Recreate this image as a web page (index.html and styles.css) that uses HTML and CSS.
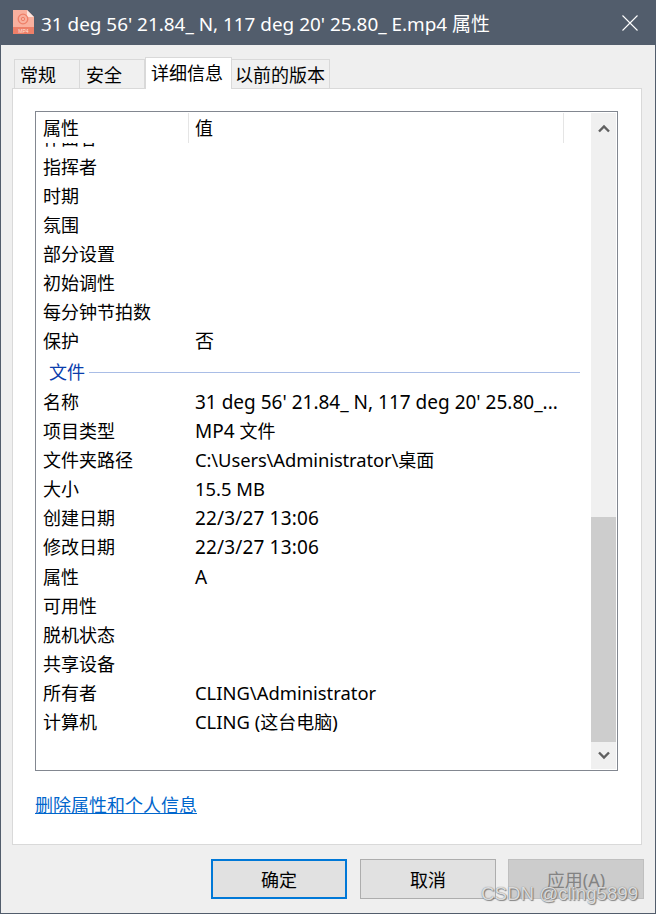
FILE: index.html
```html
<!DOCTYPE html>
<html lang="zh-CN">
<head>
<meta charset="utf-8">
<title>属性</title>
<link rel="stylesheet" href="styles.css">
</head>
<body>
<div class="window">
  <header class="titlebar">
    <svg class="file-icon" width="21" height="24" viewBox="0 0 21 24">
      <path d="M0 0H14L21 7V24H0Z" fill="#f9b09e"/>
      <path d="M14 0L21 7H14Z" fill="#fde3dc"/>
      <rect x="0" y="17" width="21" height="7" fill="#ee7f68"/>
      <circle cx="10" cy="9" r="4.8" fill="none" stroke="#ee7f68" stroke-width="1.3"/>
      <circle cx="10" cy="9" r="1.7" fill="none" stroke="#ee7f68" stroke-width="1"/>
      <text class="icon-label" x="10.5" y="22.6" text-anchor="middle">MP4</text>
    </svg>
    <span class="title">31 deg 56' 21.84_ N, 117 deg 20' 25.80_ E.mp4 属性</span>
    <svg class="close" width="16" height="16" viewBox="0 0 16 16"><path d="M.5.5L15.5 15.5M15.5.5L.5 15.5" stroke="#fff" stroke-width="1.1" fill="none"/></svg>
  </header>
  <div class="body">
    <nav class="tabs">
      <div class="tab t1">常规</div>
      <div class="tab t2">安全</div>
      <div class="tab active">详细信息</div>
      <div class="tab t4">以前的版本</div>
    </nav>
    <section class="panel">
      <div class="listbox">
        <div class="content">
          <div class="head">
            <div class="hname">属性</div>
            <div class="hvalue">值</div>
            <div class="hrest"></div>
          </div>
          <div class="viewport">
            <div class="rows">
              <div class="row"><span class="k">作曲者</span></div>
              <div class="row"><span class="k">指挥者</span></div>
              <div class="row"><span class="k">时期</span></div>
              <div class="row"><span class="k">氛围</span></div>
              <div class="row"><span class="k">部分设置</span></div>
              <div class="row"><span class="k">初始调性</span></div>
              <div class="row"><span class="k">每分钟节拍数</span></div>
              <div class="row"><span class="k">保护</span><span class="v">否</span></div>
              <div class="group"><span class="gname">文件</span><span class="gline"></span></div>
              <div class="row"><span class="k">名称</span><span class="v">31 deg 56' 21.84_ N, 117 deg 20' 25.80_...</span></div>
              <div class="row"><span class="k">项目类型</span><span class="v">MP4 <span class="cjk">文件</span></span></div>
              <div class="row"><span class="k">文件夹路径</span><span class="v tight path">C:\Users\Administrator\<span class="cjk">桌面</span></span></div>
              <div class="row"><span class="k">大小</span><span class="v tight">15.5 MB</span></div>
              <div class="row"><span class="k">创建日期</span><span class="v wide">22/3/27 13:06</span></div>
              <div class="row"><span class="k">修改日期</span><span class="v wide">22/3/27 13:06</span></div>
              <div class="row nudge"><span class="k">属性</span><span class="v">A</span></div>
              <div class="row"><span class="k">可用性</span></div>
              <div class="row"><span class="k">脱机状态</span></div>
              <div class="row"><span class="k">共享设备</span></div>
              <div class="row"><span class="k">所有者</span><span class="v tight">CLING\Administrator</span></div>
              <div class="row"><span class="k">计算机</span><span class="v tight">CLING (<span class="cjk">这台电脑</span>)</span></div>
            </div>
          </div>
        </div>
        <div class="scrollbar">
          <div class="arrow up"><svg width="12" height="9" viewBox="0 0 12 9"><path d="M1 7.5L6 2.5L11 7.5" fill="none" stroke="#606060" stroke-width="2.4"/></svg></div>
          <div class="track"><div class="thumb"></div></div>
          <div class="arrow"><svg width="12" height="9" viewBox="0 0 12 9"><path d="M1 1.5L6 6.5L11 1.5" fill="none" stroke="#606060" stroke-width="2.4"/></svg></div>
        </div>
      </div>
      <a class="link" href="#">删除属性和个人信息</a>
    </section>
    <footer class="buttons">
      <button class="btn primary">确定</button>
      <button class="btn">取消</button>
      <button class="btn disabled">应用(A)</button>
    </footer>
  </div>
  <div class="watermark">CSDN @cling5899</div>
</div>
</body>
</html>
```
FILE: styles.css
```css
* { box-sizing: border-box; }
html, body { margin: 0; padding: 0; }
body {
  width: 656px; height: 914px; overflow: hidden;
  font-family: "Noto Sans", "Noto Sans CJK SC", sans-serif;
  font-size: 18px; color: #000; background: #f0f0f0;
}
.window {
  position: relative; width: 656px; height: 914px;
  border: 1px solid #525d6c; border-top: 0;
  display: flex; flex-direction: column; background: #efefef;
}
.titlebar {
  height: 45px; flex: none; background: #525d6c; color: #fff;
  display: flex; align-items: center; padding: 0 17px 0 12px;
}
.file-icon { flex: none; margin-right: 7px; margin-bottom: 1px; }
.icon-label { font-family: "Liberation Sans", sans-serif; font-size: 5px; fill: #fde3dc; }
.title { flex: 1; font-size: 18.9px; white-space: nowrap; }
.close { flex: none; }
.body { flex: 1; display: flex; flex-direction: column; padding: 12px 13px 0 11px; }
.tabs { height: 31px; display: flex; align-items: flex-end; padding-left: 2px; position: relative; z-index: 1; }
.tab {
  height: 29px; background: #f0f0f0; border: 1px solid #d9d9d9; border-bottom: 0;
  display: flex; align-items: center; white-space: nowrap; padding-left: 5px; padding-bottom: 1px;
}
.t1 { width: 66px; }
.t2 { width: 65px; border-left: 0; padding-left: 6px; }
.active { width: 87px; height: 32px; background: #fff; margin-bottom: -1px; border-left: 1px solid #d9d9d9; padding-bottom: 3px; }
.t4 { width: 98px; border-left: 0; padding-left: 3px; }
.panel {
  height: 757px; flex: none; background: #fff; border: 1px solid #d9d9d9;
  padding: 22px 23px 0 22px; display: flex; flex-direction: column;
}
.listbox {
  height: 660px; flex: none; border: 1px solid #828790; display: flex;
  padding: 1px;
}
.content { flex: 1; min-width: 0; display: flex; flex-direction: column; }
.head { height: 30px; flex: none; display: flex; }
.hname { width: 152px; padding-left: 6px; border-right: 1px solid #e5e5e5; line-height: 30px; }
.hvalue { width: 375px; padding-left: 6px; border-right: 1px solid #e5e5e5; line-height: 30px; }
.viewport { flex: 1; overflow: hidden; }
.rows { margin-top: -19px; }
.row { height: 29px; display: flex; align-items: center; line-height: 29px; white-space: nowrap; }
.nudge { margin-top: 1px; }
.k { width: 152px; padding-left: 6px; flex: none; }
.v { padding-left: 6px; font-size: 19px; }
.tight { font-size: 18.4px; margin-bottom: 2px; }
.path { letter-spacing: -.1px; }
.wide { letter-spacing: .15px; }
.cjk { font-size: 18px; }
.group { height: 29px; display: flex; align-items: center; padding: 0 11px 0 12px; margin-bottom: 3px; }
.gname { color: #0a3dac; margin-right: 4px; }
.gline { flex: 1; height: 1px; margin-top: 3px; background: #a9bde6; }
.scrollbar { width: 25px; flex: none; background: #f0f0f0; display: flex; flex-direction: column; }
.arrow { height: 27px; flex: none; display: flex; align-items: center; justify-content: center; }
.up { padding-top: 3px; }
.track { flex: 1; display: flex; flex-direction: column; justify-content: flex-end; }
.thumb { height: 225px; background: #cdcdcd; }
.link { margin-top: 22px; color: #0066cc; font-size: 18px; line-height: 24px; align-self: flex-start; text-decoration: underline; }
.buttons { flex: 1; display: flex; gap: 13px; justify-content: flex-end; padding: 14px 0 0; margin-right: -2px; }
.btn {
  width: 136px; height: 40px; background: #e1e1e1; border: 1px solid #adadad; border-radius: 0;
  font-family: inherit; font-size: 18px; color: #000; padding: 0; margin: 0;
}
.primary { border: 2px solid #0078d7; }
.disabled { background: #cccccc; border-color: #bfbfbf; color: #838383; margin-left: -1px; }
.watermark {
  position: absolute; left: 480px; top: 883px; font-family: "Liberation Sans", sans-serif;
  font-size: 18.7px; color: rgba(255,255,255,.75);
  text-shadow: 0 0 1px #666, 1px 1px 1px rgba(90,90,90,.7);
}
```
